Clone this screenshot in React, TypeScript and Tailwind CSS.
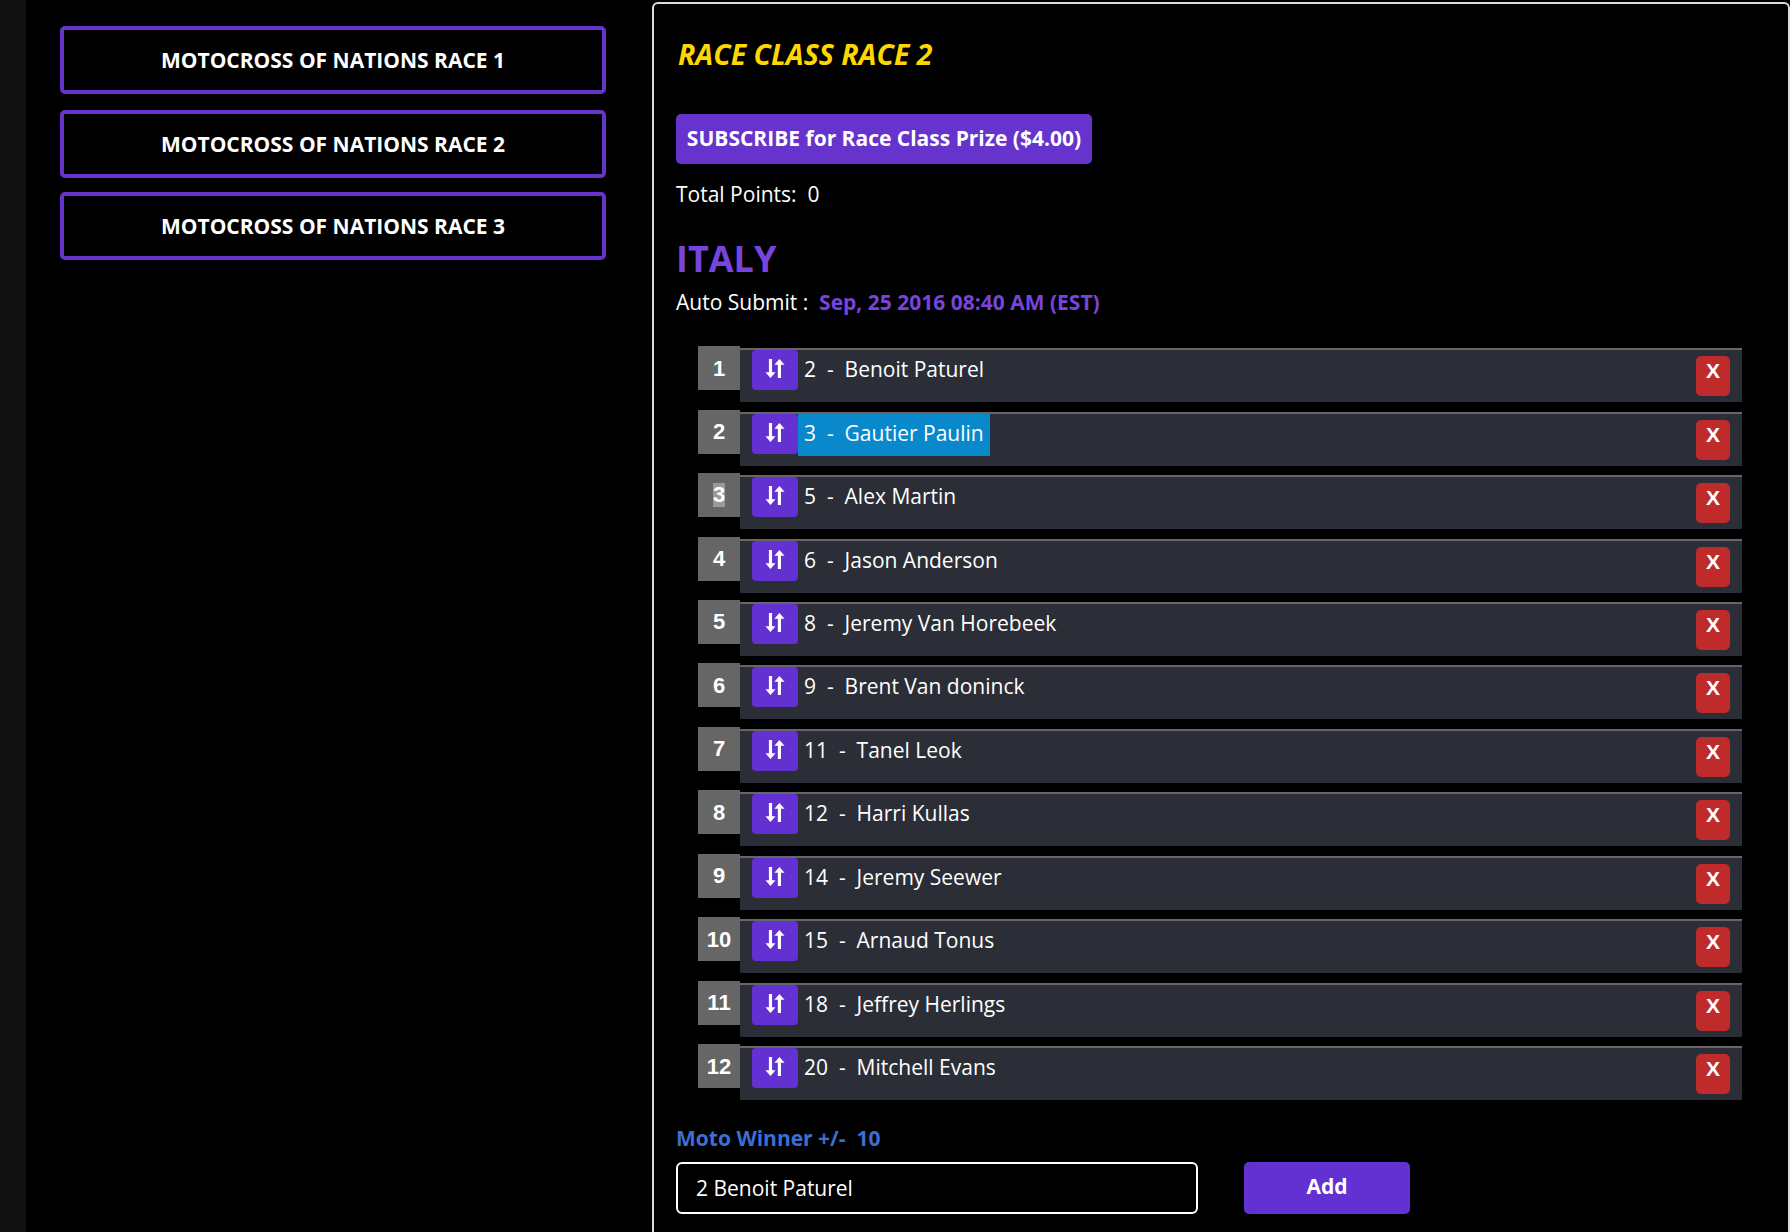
const riders = [
  "2  -  Benoit Paturel",
  "3  -  Gautier Paulin",
  "5  -  Alex Martin",
  "6  -  Jason Anderson",
  "8  -  Jeremy Van Horebeek",
  "9  -  Brent Van doninck",
  "11  -  Tanel Leok",
  "12  -  Harri Kullas",
  "14  -  Jeremy Seewer",
  "15  -  Arnaud Tonus",
  "18  -  Jeffrey Herlings",
  "20  -  Mitchell Evans",
];

function SortIcon() {
  return (
    <svg width="20" height="21" viewBox="0 0 19 20" fill="white">
      <path d="M3.7 1h3v12.5H10L5.2 19 .4 13.5h3.3z" />
      <path d="M12.2 19h3V6.5h3.4L13.7 1 8.9 6.5h3.3z" />
    </svg>
  );
}

function SideButton({ label, className }: { label: string; className: string }) {
  return (
    <div
      className={`flex h-[68px] w-[546px] items-center justify-center rounded-[5px] border-[4px] border-[#6633cc] pt-[1px] text-[21px] font-bold text-white ${className}`}
    >
      {label}
    </div>
  );
}

function Row({ n, text, i }: { n: number; text: string; i: number }) {
  return (
    <div className="flex h-[56px] items-start">
      <div className="flex h-[44px] w-[42px] shrink-0 items-center justify-center bg-[#666666] font-['Liberation_Sans'] text-[22px] font-bold text-white">
        {n === 3 ? <span className="bg-[#999999] leading-[24px]">3</span> : n}
      </div>
      <div className="mt-[2px] flex h-[54px] flex-1 items-start border-t-2 border-[#666666] bg-[#2b2e36] pl-[12px] pr-[12px]">
        <div className="flex h-[40px] w-[46px] shrink-0 items-center justify-center rounded-[4px] bg-[#6331d1] pb-[3px]">
          <SortIcon />
        </div>
        <div className="flex-1">
          <span
            className={`inline-block h-[42px] whitespace-pre pl-[6px] pr-[6px] text-[21px] leading-[39px] text-white ${i === 1 ? "bg-[#0a88cc]" : ""}`}
          >
            {text}
          </span>
        </div>
        <div className="mt-[6px] flex h-[40px] w-[34px] shrink-0 items-start justify-center rounded-[5px] bg-[#bf2a2a] pt-[3px] font-['Liberation_Sans'] text-[21px] font-bold leading-[24px] text-white">
          X
        </div>
      </div>
    </div>
  );
}

export default function App() {
  return (
    <div className="flex h-[1232px] overflow-hidden bg-black font-['Open_Sans',sans-serif] text-white">
      <div className="w-[26px] shrink-0 bg-[#111111]" />
      <aside className="w-[626px] shrink-0 pl-[34px] pt-[26px]">
        <SideButton label="MOTOCROSS OF NATIONS RACE 1" className="mb-[16px]" />
        <SideButton label="MOTOCROSS OF NATIONS RACE 2" className="mb-[14px]" />
        <SideButton label="MOTOCROSS OF NATIONS RACE 3" className="" />
      </aside>
      <main className="mt-[2px] h-[1300px] flex-1 rounded-[6px] border-2 border-[#dddddd] pl-[22px] pr-[46px] pt-[32px]">
        <h2 className="ml-[2px] text-[28.5px] font-bold italic leading-[36px] text-[#ffd700]">RACE CLASS RACE 2</h2>
        <div className="mt-[42px] flex h-[50px] w-[416px] items-center justify-center rounded-[5px] bg-[#6633cc] text-[21px] font-bold text-white">
          SUBSCRIBE for Race Class Prize ($4.00)
        </div>
        <div className="mt-[15px] whitespace-pre text-[21px] leading-[30px]">Total Points:  0</div>
        <div className="mt-[25px] text-[36px] font-bold leading-[50px] text-[#7744dd]">ITALY</div>
        <div className="mt-[3px] whitespace-pre text-[21px] leading-[30px]">
          Auto Submit :  <span className="font-bold text-[#7744dd]">Sep, 25 2016 08:40 AM (EST)</span>
        </div>
        <div className="ml-[22px] mt-[29.2px] flex flex-col gap-[7.45px]">
          {riders.map((r, i) => (
            <Row key={r} n={i + 1} text={r} i={i} />
          ))}
        </div>
        <div className="mt-[23px] whitespace-pre text-[21px] font-bold leading-[30px] text-[#3b6fd4]">Moto Winner +/-  10</div>
        <div className="mt-[9px] flex gap-[46px]">
          <div className="flex h-[52px] w-[522px] items-center rounded-[6px] border-2 border-white pl-[18px] pt-[1px] text-[21px]">2 Benoit Paturel</div>
          <div className="flex h-[52px] w-[166px] items-center justify-center rounded-[5px] bg-[#6331d1] pb-[3px] text-[21px] font-bold">Add</div>
        </div>
      </main>
    </div>
  );
}
